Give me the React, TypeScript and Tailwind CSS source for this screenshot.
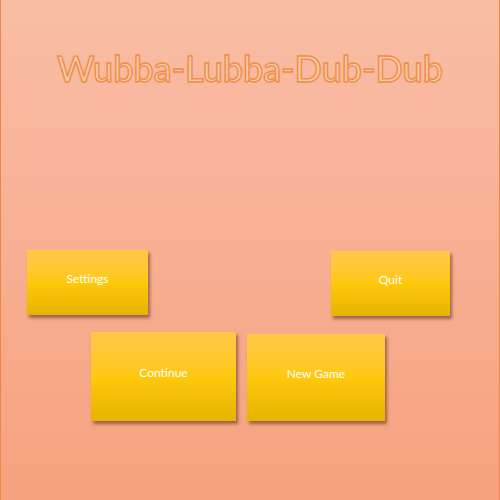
function MenuButton({ label, className }: { label: string; className: string }) {
  return (
    <button
      className={`flex items-center justify-center pb-2 bg-gradient-to-b from-[#ffc846] via-[#ffc80c] to-[#e6b300] text-white text-[12px] font-['Lato',sans-serif] shadow-[2px_3px_3px_rgba(90,40,20,0.55)] ${className}`}
    >
      {label}
    </button>
  )
}

export default function App() {
  return (
    <div className="flex h-[500px] w-[500px] flex-col border-x border-[#f0873f] bg-gradient-to-b from-[#f9bda6] to-[#f6a17f]">
      {/* title */}
      <h1 className="pt-[46px] text-center font-['Lato',sans-serif] text-[36px] font-medium leading-[44px] text-[#f9c8a6] [-webkit-text-stroke:1.4px_#ef8e45]">
        Wubba-Lubba-Dub-Dub
      </h1>

      {/* first row */}
      <div className="mt-[160px] flex items-start pl-[26px]">
        <MenuButton label="Settings" className="h-[65px] w-[121px]" />
        <MenuButton label="Quit" className="ml-[183px] mt-[1px] h-[65px] w-[119px]" />
      </div>

      {/* second row */}
      <div className="mt-[16px] flex items-start pl-[90px]">
        <MenuButton label="Continue" className="h-[89px] w-[145px]" />
        <MenuButton label="New Game" className="ml-[11px] mt-[2px] h-[87px] w-[138px]" />
      </div>
    </div>
  )
}
